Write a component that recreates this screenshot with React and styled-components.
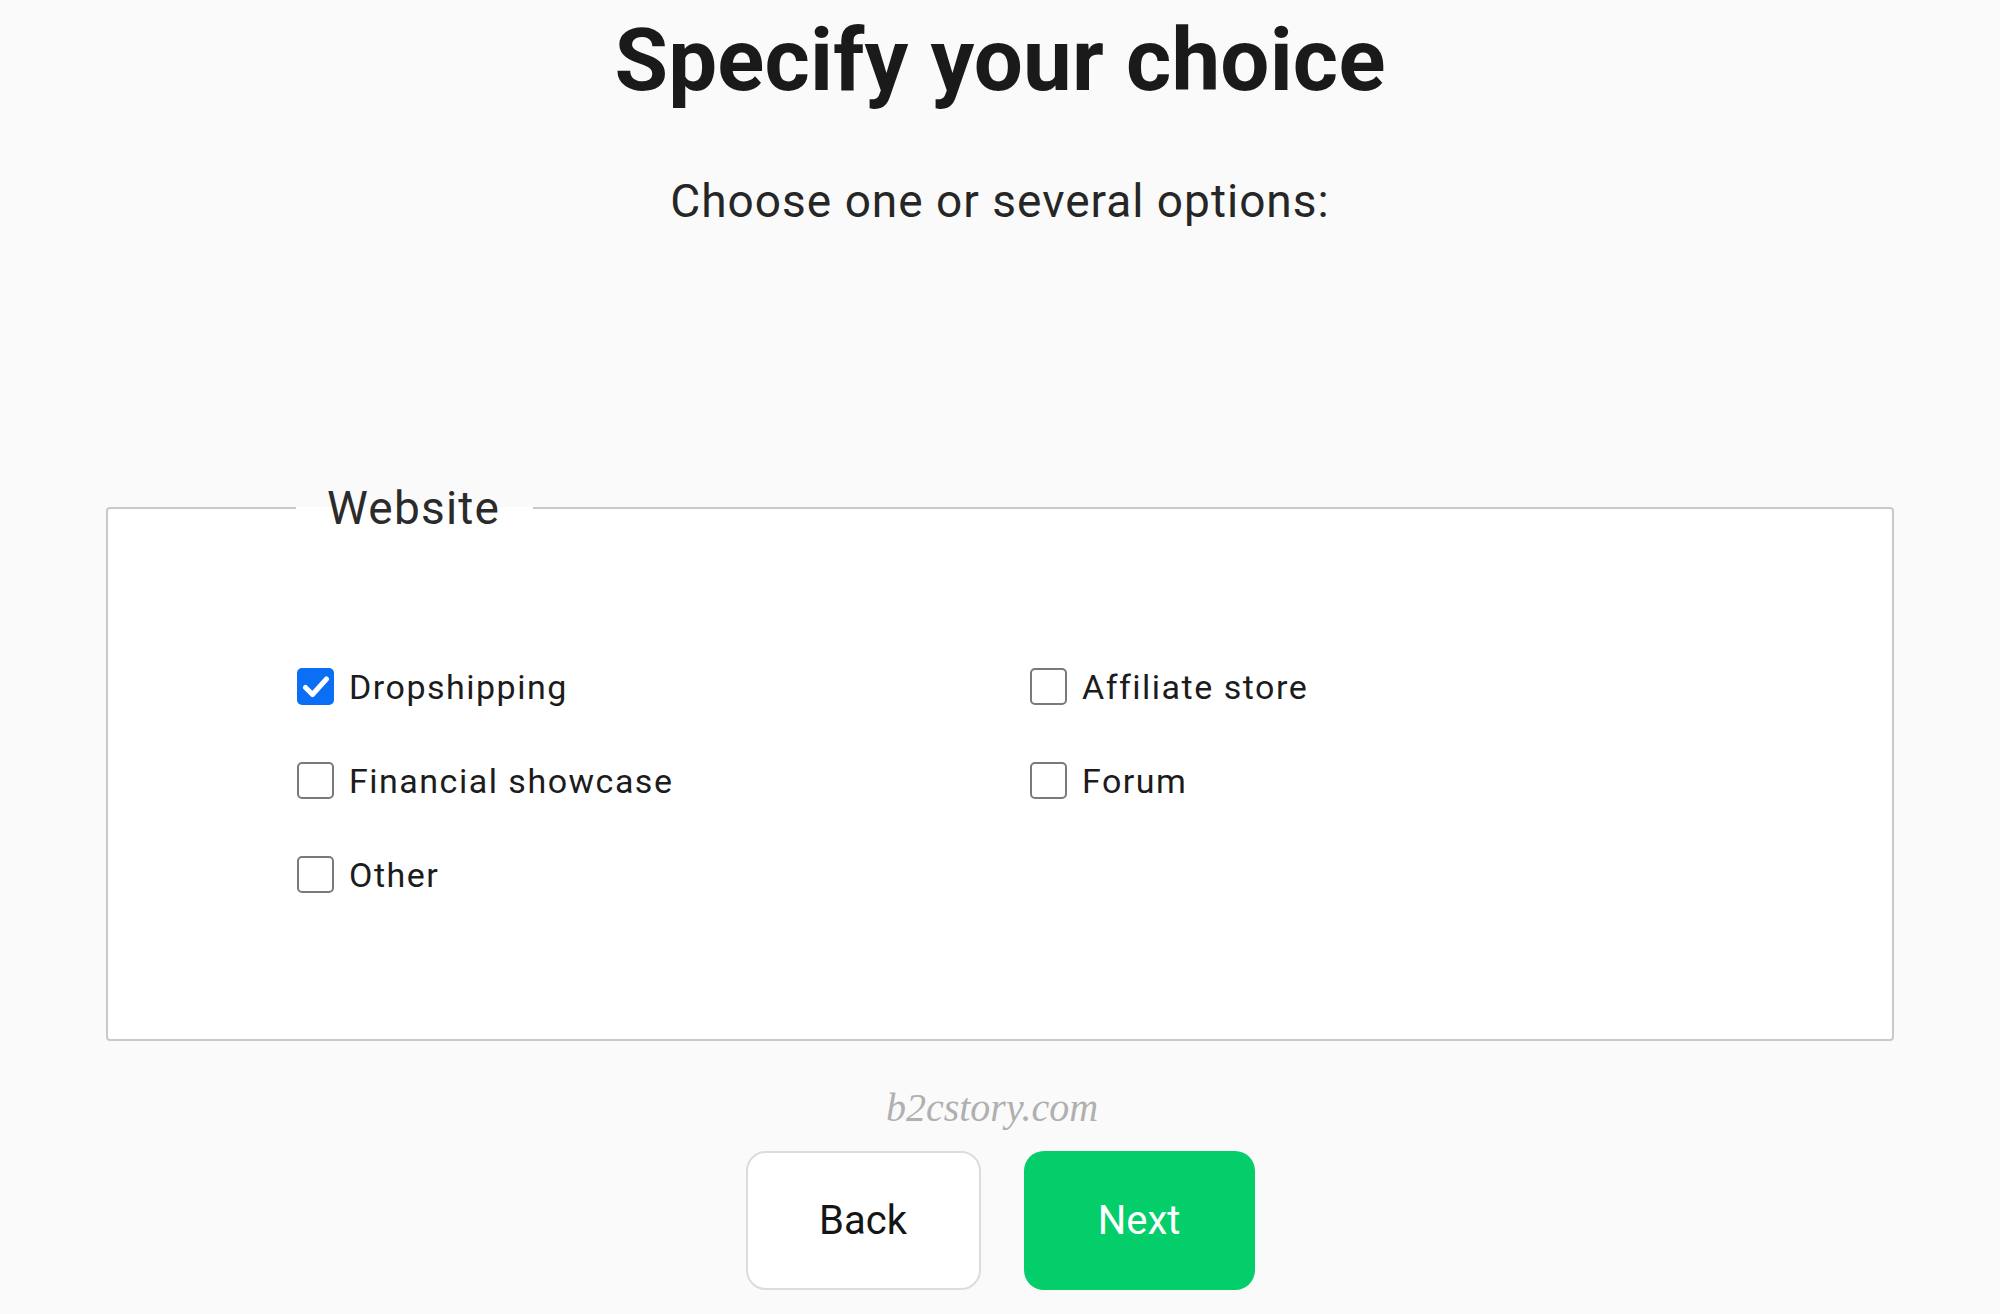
import React, { useState } from 'react';
import styled, { createGlobalStyle } from 'styled-components';

const GlobalStyle = createGlobalStyle`
  html, body {
    margin: 0;
    padding: 0;
    background-color: #fafafa;
    font-family: Roboto, "Liberation Sans", Arial, sans-serif;
  }
`;

const PageWrapper = styled.div`
  display: flex;
  flex-direction: column;
  align-items: center;
  min-height: 1314px;
`;

const Title = styled.h1`
  margin: 10px 0 0;
  font-size: 87px;
  line-height: 100px;
  font-weight: 700;
  color: #1a1a1a;
  letter-spacing: 0.2px;
`;

const Subtitle = styled.p`
  margin: 63px 0 0;
  font-size: 46px;
  line-height: 56px;
  font-weight: 400;
  color: #262626;
  letter-spacing: 1px;
`;

const Group = styled.fieldset`
  box-sizing: border-box;
  width: 1788px;
  margin: 253px 0 0;
  padding: 0;
  background-color: #ffffff;
  border: 2px solid #c9c9c9;
  border-radius: 4px;
  min-inline-size: 0;
`;

const GroupTitle = styled.legend`
  margin-left: 188px;
  padding: 0 33px 0 31px;
  font-size: 46px;
  line-height: 52px;
  color: #2b2b2b;
  letter-spacing: 1.2px;
`;

const OptionsGrid = styled.div`
  display: grid;
  grid-template-columns: 733px 1fr;
  row-gap: 57px;
  padding: 134px 0 146px 189px;
`;

const OptionRow = styled.label`
  display: flex;
  align-items: center;
  gap: 15px;
  height: 37px;
  cursor: pointer;
  user-select: none;
`;

const Box = styled.span`
  box-sizing: border-box;
  width: 37px;
  height: 37px;
  flex: none;
  display: flex;
  align-items: center;
  justify-content: center;
  border-radius: 5px;
  border: ${(p) => (p.checked ? 'none' : '2px solid #7a7a7a')};
  background-color: ${(p) => (p.checked ? '#0b6ff5' : '#ffffff')};
`;

const OptionText = styled.span`
  font-size: 34px;
  line-height: 40px;
  color: #1c1c1c;
  letter-spacing: 1.5px;
`;

const Brand = styled.div`
  margin: 45px 16px 0 0;
  font-family: "Liberation Serif", "Times New Roman", serif;
  font-style: italic;
  font-size: 40px;
  line-height: 44px;
  color: #b0b0b0;
`;

const ButtonBar = styled.div`
  display: flex;
  gap: 43px;
  margin-top: 21px;
`;

const Button = styled.button`
  box-sizing: border-box;
  width: ${(p) => (p.primary ? '231px' : '235px')};
  height: 139px;
  border-radius: 20px;
  font-family: Roboto, "Liberation Sans", Arial, sans-serif;
  font-size: 40px;
  font-weight: 400;
  cursor: pointer;
  border: ${(p) => (p.primary ? 'none' : '2px solid #dcdcdc')};
  background-color: ${(p) => (p.primary ? '#03ce6a' : '#ffffff')};
  color: ${(p) => (p.primary ? '#ffffff' : '#151515')};
`;

const options = [
  'Dropshipping',
  'Affiliate store',
  'Financial showcase',
  'Forum',
  'Other',
];

function CheckMark() {
  return (
    <svg width="28" height="24" viewBox="0 0 28 24">
      <path d="M3.5 12.5 L10.5 19.5 L24.5 4" fill="none" stroke="#ffffff" strokeWidth="5" strokeLinecap="round" strokeLinejoin="round" />
    </svg>
  );
}

function App() {
  const [selected, setSelected] = useState(['Dropshipping']);

  const toggle = (name) => {
    setSelected((prev) =>
      prev.includes(name) ? prev.filter((n) => n !== name) : [...prev, name]
    );
  };

  return (
    <PageWrapper>
      <GlobalStyle />
      <Title>Specify your choice</Title>
      <Subtitle>Choose one or several options:</Subtitle>

      <Group>
        <GroupTitle>Website</GroupTitle>
        <OptionsGrid>
          {options.map((name) => {
            const checked = selected.includes(name);
            return (
              <OptionRow key={name} onClick={() => toggle(name)}>
                <Box checked={checked}>{checked && <CheckMark />}</Box>
                <OptionText>{name}</OptionText>
              </OptionRow>
            );
          })}
        </OptionsGrid>
      </Group>

      <Brand>b2cstory.com</Brand>
      <ButtonBar>
        <Button>Back</Button>
        <Button primary>Next</Button>
      </ButtonBar>
    </PageWrapper>
  );
}

export default App;
